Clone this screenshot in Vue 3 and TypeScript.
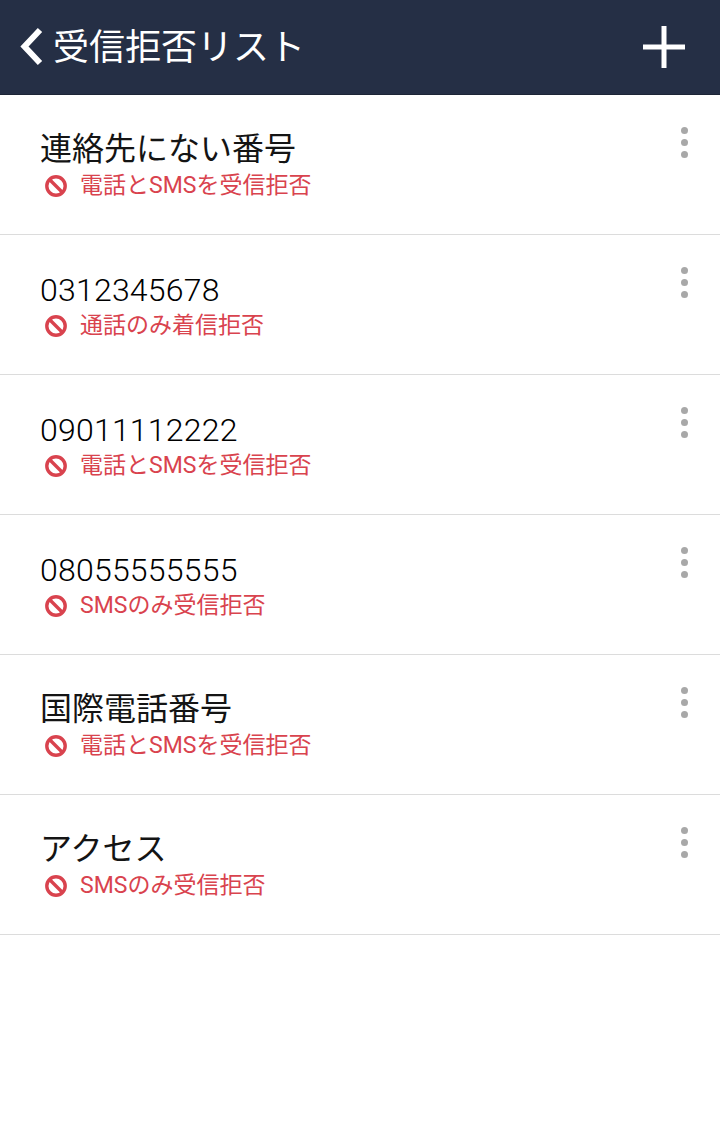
<script setup lang="ts">
interface Row { name: string; status: string }
const rows: Row[] = [
  { name: '連絡先にない番号', status: '電話とSMSを受信拒否' },
  { name: '0312345678', status: '通話のみ着信拒否' },
  { name: '09011112222', status: '電話とSMSを受信拒否' },
  { name: '08055555555', status: 'SMSのみ受信拒否' },
  { name: '国際電話番号', status: '電話とSMSを受信拒否' },
  { name: 'アクセス', status: 'SMSのみ受信拒否' },
]
const isNumber = (s: string): boolean => /^\d+$/.test(s)
</script>

<template>
  <div class="page">
    <header class="bar">
      <svg class="back" width="26" height="40" viewBox="0 0 26 40">
        <path d="M21 3 L5.5 19.5 L21 36" fill="none" stroke="#fff" stroke-width="6" />
      </svg>
      <h1 class="title">受信拒否リスト</h1>
      <svg class="plus" width="44" height="44" viewBox="0 0 44 44">
        <path d="M1 22 H43 M22 1 V43" fill="none" stroke="#fff" stroke-width="5" />
      </svg>
    </header>
    <ul class="list">
      <li v-for="r in rows" :key="r.name" class="row">
        <div class="texts">
          <div class="name" :class="{ num: isNumber(r.name) }">{{ r.name }}</div>
          <div class="status">
            <svg class="ban" width="24" height="24" viewBox="0 0 24 24">
              <circle cx="12" cy="12" r="9.2" fill="none" stroke="#d9434e" stroke-width="3.4" />
              <path d="M6 6 L18 18" stroke="#d9434e" stroke-width="3.4" />
            </svg>
            <span class="label">{{ r.status }}</span>
          </div>
        </div>
        <div class="more"><i></i><i></i><i></i></div>
      </li>
    </ul>
  </div>
</template>

<style scoped>
.page {
  width: 720px;
  height: 1130px;
  background: #fff;
  font-family: "Roboto", "Noto Sans CJK JP", sans-serif;
  overflow: hidden;
}
.bar {
  height: 95px;
  box-sizing: border-box;
  background: #252f45;
  border-bottom: 1px solid #1d2536;
  display: flex;
  align-items: center;
  padding: 0 34px 0 19px;
}
.back { flex: none; margin-right: 8px; }
.title {
  flex: 1;
  margin: 0;
  padding-top: 1px;
  color: #fff;
  font-size: 36px;
  font-weight: 400;
  line-height: 44px;
}
.plus { flex: none; }
.list { list-style: none; margin: 0; padding: 0; }
.row {
  height: 140px;
  box-sizing: border-box;
  border-bottom: 1px solid #dcdcdc;
  display: flex;
  justify-content: space-between;
  padding: 32px 32px 0 40px;
}
.name {
  color: #141414;
  font-size: 32px;
  font-weight: 400;
  line-height: 42px;
  padding-top: 1px;
}
.name.num {
  font-weight: 300;
  color: #000;
  letter-spacing: 0.22px;
  padding-top: 2px;
  margin-bottom: -1px;
}
.status {
  display: flex;
  align-items: center;
  gap: 12px;
  margin-left: 4px;
  margin-top: 1px;
  color: #d9434e;
  font-size: 23px;
  line-height: 30px;
}
.ban { flex: none; }
.more {
  display: flex;
  flex-direction: column;
  gap: 5px;
}
.more i {
  display: block;
  width: 7px;
  height: 7px;
  border-radius: 50%;
  background: #a8a8a8;
}
</style>
